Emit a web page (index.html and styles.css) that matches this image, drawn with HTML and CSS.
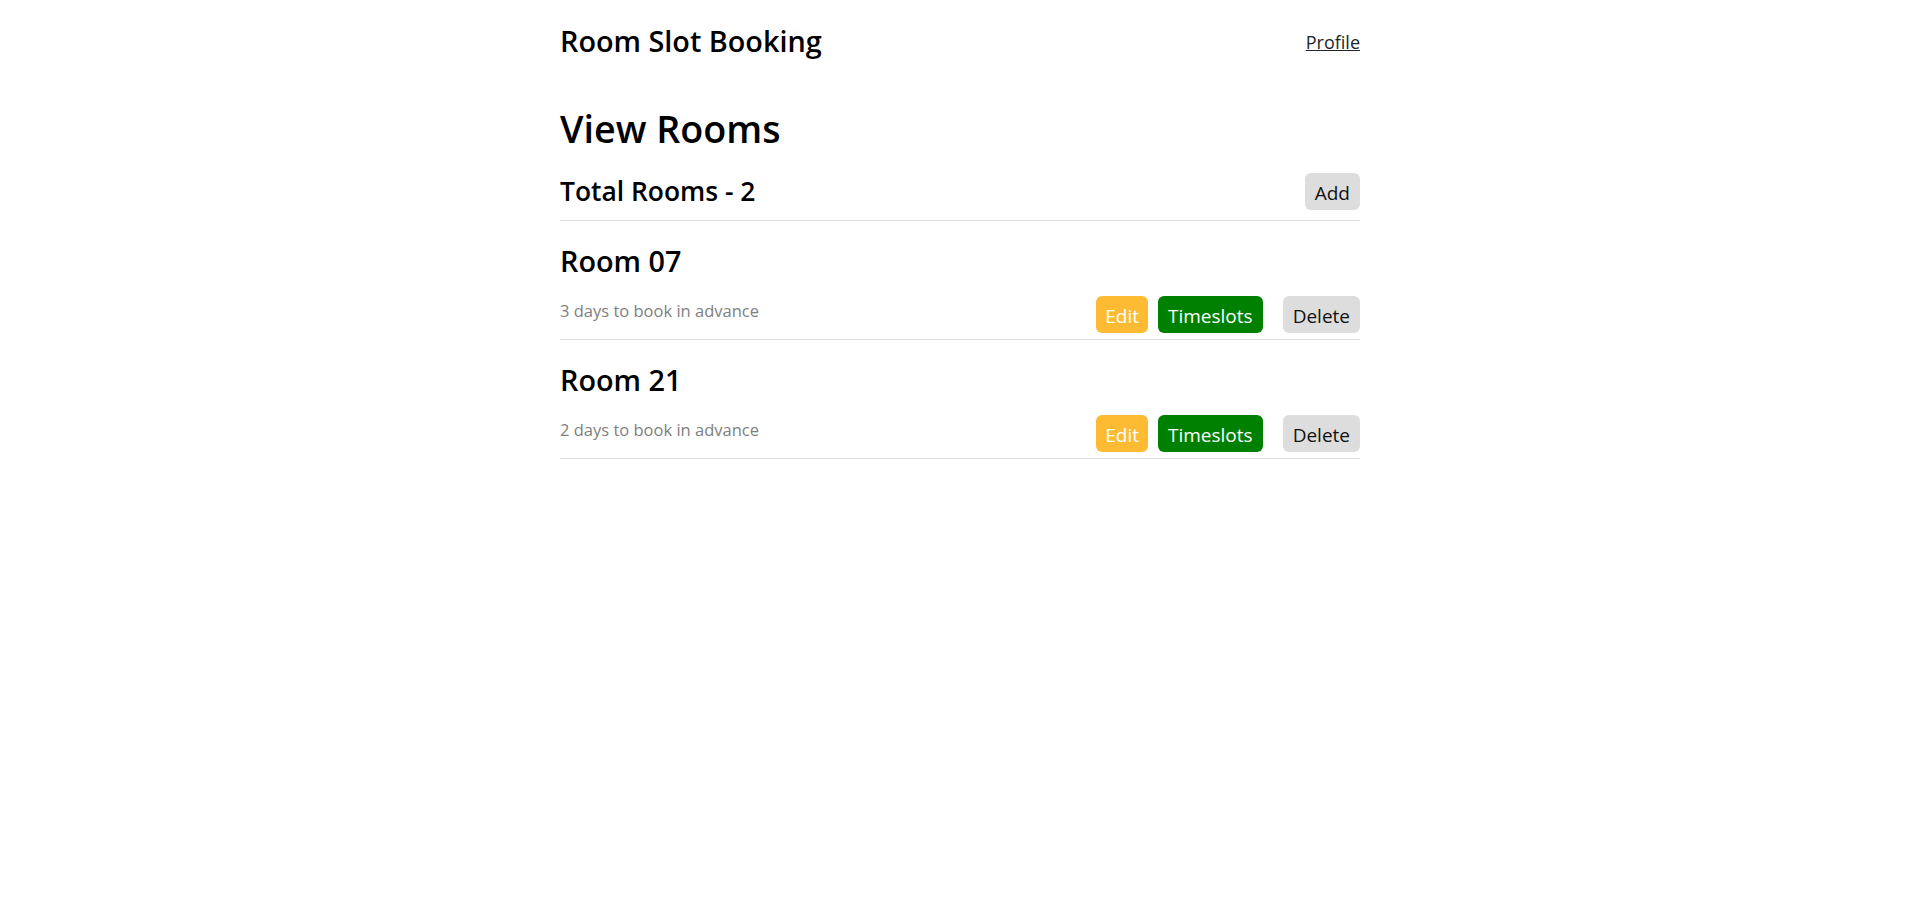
FILE: index.html
```html
<!DOCTYPE html>
<html lang="en">
<head>
<meta charset="utf-8">
<title>Room Slot Booking</title>
<link rel="stylesheet" href="styles.css">
</head>
<body>
<div class="container">
  <header class="header">
    <div class="brand">Room Slot Booking</div>
    <a class="profile" href="#">Profile</a>
  </header>
  <h1 class="page-title">View Rooms</h1>
  <div class="summary">
    <h2 class="summary-title">Total Rooms - 2</h2>
    <button class="btn btn-grey">Add</button>
  </div>
  <div class="room">
    <h3 class="room-name">Room 07</h3>
    <div class="room-bottom">
      <p class="room-desc">3 days to book in advance</p>
      <div class="actions">
        <button class="btn btn-edit">Edit</button>
        <button class="btn btn-green">Timeslots</button>
        <button class="btn btn-grey btn-delete">Delete</button>
      </div>
    </div>
  </div>
  <div class="room">
    <h3 class="room-name">Room 21</h3>
    <div class="room-bottom">
      <p class="room-desc">2 days to book in advance</p>
      <div class="actions">
        <button class="btn btn-edit">Edit</button>
        <button class="btn btn-green">Timeslots</button>
        <button class="btn btn-grey btn-delete">Delete</button>
      </div>
    </div>
  </div>
</div>
</body>
</html>
```

FILE: styles.css
```css
* { box-sizing: border-box; }
body {
  margin: 0;
  font-family: "Open Sans", "Noto Sans", sans-serif;
  color: #000;
  background: #fff;
}
.container {
  width: 800px;
  margin: 0 auto;
}
.header {
  display: flex;
  justify-content: space-between;
  align-items: center;
  padding-top: 21px;
}
.brand {
  font-size: 28.8px;
  line-height: 40px;
  font-weight: 600;
}
.profile {
  margin-top: 2px;
  font-size: 18px;
  line-height: 24px;
  color: #212529;
  text-decoration: underline;
}
.page-title {
  margin: 44px 0 0;
  font-size: 37.7px;
  line-height: 48px;
  font-weight: 600;
}
.summary {
  display: flex;
  justify-content: space-between;
  align-items: center;
  margin-top: 20px;
  padding-bottom: 10px;
  border-bottom: 1px solid #dddddd;
}
.summary-title {
  margin: 0;
  font-size: 26.4px;
  line-height: 37px;
  font-weight: 600;
}
.btn {
  height: 37px;
  padding: 3px 10px 0;
  border: none;
  border-radius: 6px;
  font-family: inherit;
  font-size: 19px;
  line-height: 34px;
  cursor: pointer;
}
.btn-grey { background: #dddddd; color: #111; }
.btn-edit { background: #fdbb33; color: #fff; padding: 3px 9px 0; }
.btn-green { background: #008000; color: #fff; }
.room {
  padding: 22px 0 6px;
  border-bottom: 1px solid #dddddd;
}
.room-name {
  margin: 0;
  font-size: 28.8px;
  line-height: 36px;
  font-weight: 600;
}
.room-bottom {
  display: flex;
  justify-content: space-between;
  align-items: flex-start;
  margin-top: 17px;
}
.room-desc {
  margin: 3px 0 0;
  font-size: 16.5px;
  line-height: 24px;
  color: #808080;
}
.actions {
  display: flex;
  gap: 10px;
}
.btn-delete { margin-left: 10px; }
```
